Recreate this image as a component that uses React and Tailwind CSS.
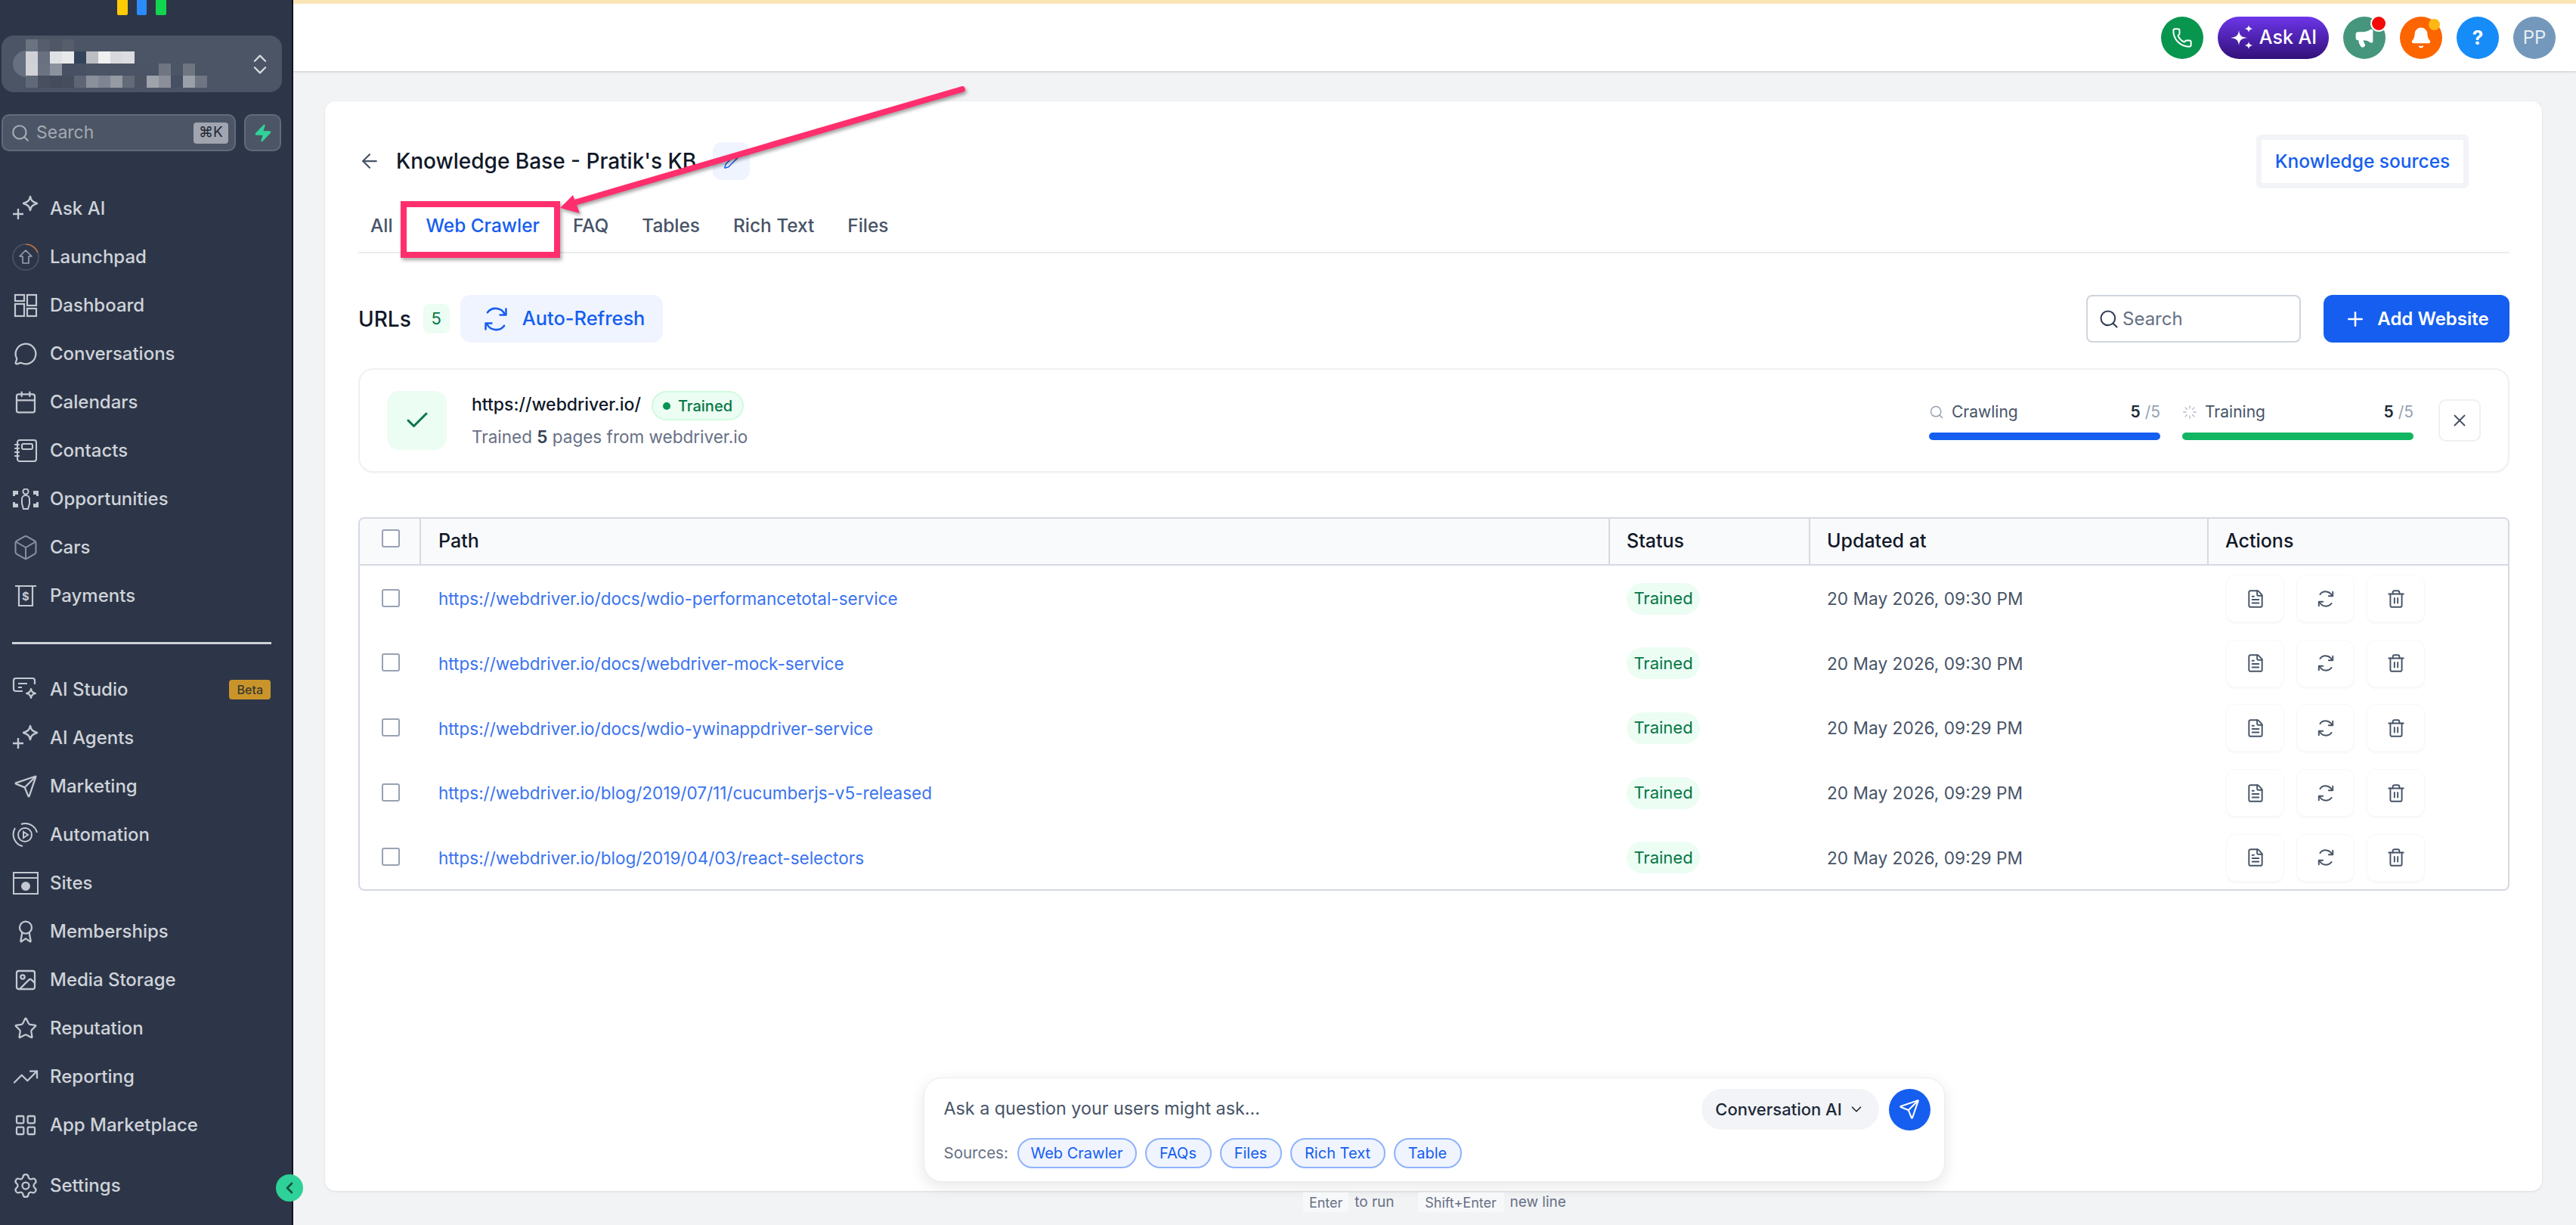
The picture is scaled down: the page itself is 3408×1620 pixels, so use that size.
import React from "react";
import {
  ArrowLeft, Award, Bell, Box, Calendar, Check, ChevronDown, ChevronLeft, ChevronsUpDown, FileText, Image, LayoutGrid,
  Loader, Megaphone, MessageCircle, Pencil, Phone, Plus, Search, Send, Settings, Star, Trash2, TrendingUp, X, Zap,
} from "lucide-react";

const Refresh = ({ className, sw = 1.8 }) => (
  <svg viewBox="0 0 24 24" className={className} fill="none" stroke="currentColor" strokeWidth={sw} strokeLinecap="round" strokeLinejoin="round">
    <path d="M19.5 8A8.5 8.5 0 0 0 5 6.5" />
    <path d="M20.5 3.5v5h-5" />
    <path d="M4.5 16A8.5 8.5 0 0 0 19 17.5" />
    <path d="M3.5 20.5v-5h5" />
  </svg>
);
const Sparkle = () => (
  <svg viewBox="0 0 36 36" className="h-[36px] w-[36px]" fill="none" stroke="currentColor" strokeWidth="2.4">
    <path d="M1 25h14M8 18v14" />
    <path d="M24 2c1 5 3 7 9 9-6 2-8 4-9 9-1-5-3-7-9-9 6-2 8-4 9-9z" strokeLinejoin="round" />
  </svg>
);
const Launch = () => (
  <svg viewBox="0 0 36 36" className="h-[36px] w-[36px]" fill="none" strokeWidth="1.6">
    <circle cx="18" cy="18" r="17" stroke="#4b5565" />
    <path d="M18 1a17 17 0 0 1 16 11" stroke="#c2703d" />
    <path d="M18 9l8 8h-4v9h-8v-9h-4z" stroke="#98a2b3" strokeLinejoin="round" />
  </svg>
);
const Dash = () => (
  <svg viewBox="0 0 32 32" className="h-[32px] w-[32px]" fill="none" stroke="currentColor" strokeWidth="2.2">
    <rect x="2" y="2" width="12" height="8" /><rect x="18" y="2" width="12" height="14" />
    <rect x="2" y="14" width="12" height="16" /><rect x="18" y="20" width="12" height="10" />
  </svg>
);
const ContactsIcon = () => (
  <svg viewBox="0 0 32 32" className="h-[32px] w-[32px]" fill="none" stroke="currentColor" strokeWidth="2.1" strokeLinecap="round">
    <rect x="5" y="2" width="25" height="28" rx="3" />
    <rect x="11" y="7" width="14" height="7" rx="2" />
    <path d="M2 8h5M2 13h5M2 18h5M2 23h5" />
  </svg>
);
const Opp = () => (
  <svg viewBox="0 0 36 28" className="h-[28px] w-[36px]" fill="currentColor">
    <circle cx="18" cy="4" r="3.5" fill="none" stroke="currentColor" strokeWidth="2" />
    <path d="M13 14a5 5 0 0 1 10 0v6l-2 7h-6l-2-7z" fill="none" stroke="currentColor" strokeWidth="2" />
    <path d="M1 3h7v5H4v2H1zM28 3h7v7h-3V8h-4zM1 18h3v2h4v5H1zM32 18h3v7h-7v-5h4z" />
  </svg>
);
const Pay = () => (
  <svg viewBox="0 0 32 32" className="h-[32px] w-[32px]" fill="none" stroke="currentColor" strokeWidth="2.2">
    <path d="M2 3h28M7 3v26h18V3" />
    <text x="16" y="22" textAnchor="middle" fontSize="15" fontWeight="700" fill="currentColor" stroke="none" fontFamily="Inter, sans-serif">$</text>
  </svg>
);
const Studio = () => (
  <svg viewBox="0 0 36 34" className="h-[34px] w-[36px]" fill="none" stroke="currentColor" strokeWidth="2.2">
    <path d="M14 19H5a3 3 0 0 1-3-3V5a3 3 0 0 1 3-3h22a3 3 0 0 1 3 3v5" />
    <path d="M8 9h12M8 14h5" />
    <path d="M25 16c1 4 2 5 6 6-4 1-5 2-6 6-1-4-2-5-6-6 4-1 5-2 6-6z" strokeLinejoin="round" />
  </svg>
);
const Auto = () => (
  <svg viewBox="0 0 36 32" className="h-[32px] w-[36px]" fill="none" stroke="currentColor" strokeWidth="2">
    <path d="M33 13A16 16 0 0 0 12 2M4 7a16 16 0 0 0 10 24" />
    <circle cx="17" cy="16" r="9" />
    <path d="M15 12l6 4-6 4z" />
  </svg>
);
const SiteIcon = () => (
  <svg viewBox="0 0 34 30" className="h-[30px] w-[34px]" fill="none" stroke="currentColor" strokeWidth="2">
    <rect x="1" y="1" width="32" height="28" />
    <path d="M1 8h32" />
    <circle cx="17" cy="19" r="5" fill="currentColor" />
  </svg>
);

const lc = "h-[32px] w-[32px]";
const group1 = [
  ["Ask AI", <Sparkle />], ["Launchpad", <Launch />], ["Dashboard", <Dash />],
  ["Conversations", <MessageCircle className={lc} strokeWidth={1.7} />], ["Calendars", <Calendar className={lc} strokeWidth={1.7} />],
  ["Contacts", <ContactsIcon />], ["Opportunities", <Opp />],
  ["Cars", <Box className="h-[38px] w-[38px] text-[#8a93a3]" strokeWidth={1.3} />], ["Payments", <Pay />],
];
const group2 = [
  ["AI Agents", <Sparkle />], ["Marketing", <Send className={lc} strokeWidth={1.7} />], ["Automation", <Auto />], ["Sites", <SiteIcon />],
  ["Memberships", <Award className={lc} strokeWidth={1.7} />], ["Media Storage", <Image className={lc} strokeWidth={1.7} />],
  ["Reputation", <Star className={lc} strokeWidth={1.7} />], ["Reporting", <TrendingUp className="h-[36px] w-[36px]" strokeWidth={1.5} />],
  ["App Marketplace", <LayoutGrid className={lc} strokeWidth={1.7} />],
];

const NavItem = ({ label, icon, badge }) => (
  <div className="flex h-[64px] items-center pl-[16px] pr-[28px]">
    <span className="flex w-[36px] justify-center text-[#c3c8d1]">{icon}</span>
    <span className="ml-[14px] text-[24px] font-medium text-[#cfd3da]">{label}</span>
    {badge && <span className="ml-auto flex h-[26px] items-center rounded-[4px] bg-[#c9952b] px-[10px] text-[16px] font-medium text-[#3d3a2e]">{badge}</span>}
  </div>
);

const mosaic = [
  ["#6b7280", "#565e6d", "#505867", "#565e6c"],
  ["#cfd1d6", "#697080", "#e0e1e4", "#e8e9ea", "#33435a", "#bcbec3", "#f0f0f1", "#d8d9dc", "#dcdde0"],
  ["#d0d2d6", "#6b7280", "#8b919d", "#485163", "#485163", "#4b5464", "#4b5464", "#4b5464", "#4b5464", "#4b5464", "#4b5464", "#6f7682", "#4b5565", "#6f7682"],
  ["#616877", "#485060", "#444c5c", "#464e5e", "#5e6574", "#8b919b", "#7e8491", "#959aa3", "#636a78", "#4c5464", "#9ea3ab", "#8a8f99", "#465063", "#9a9fa8", "#6f7582"],
];

const Sidebar = () => (
  <aside className="relative flex h-full w-[388px] shrink-0 flex-col border-r-2 border-[#0f1420] bg-[#2d3648]">
    <div className="flex h-[20px] justify-center gap-[12px] pr-[11px]">
      <span className="h-[20px] w-[14px] rounded-b-[2px] bg-[#ffcb05]" />
      <span className="h-[20px] w-[13px] rounded-b-[2px] bg-[#2b8cff]" />
      <span className="h-[20px] w-[14px] rounded-b-[2px] bg-[#12d64f]" />
    </div>
    <div className="relative mx-[2px] mt-[27px] h-[75px] w-[371px] rounded-[16px] bg-[#4b5565] pt-[5px]">
      <span className="absolute left-[15px] top-[20px] h-[35px] w-[30px] rounded-l-full bg-[#667080]" />
      {mosaic.map((r, i) => (
        <div key={i} className="relative flex pl-[32px]">
          {r.map((c, j) => <span key={j} className="h-[16px] w-[16px]" style={{ backgroundColor: c }} />)}
        </div>
      ))}
      <ChevronsUpDown className="absolute right-[12px] top-[21px] h-[34px] w-[34px] text-[#d7dade]" strokeWidth={1.6} />
    </div>
    <div className="mx-[2px] mt-[29px] flex gap-[11px]">
      <div className="flex h-[49px] w-[310px] items-center rounded-[10px] border-2 border-[#626b7a] bg-[#4b5565] pl-[10px] pr-[8px]">
        <Search className="h-[26px] w-[26px] text-[#a6abb5]" strokeWidth={2} />
        <span className="ml-[8px] text-[23px] text-[#a4a9b3]">Search</span>
        <span className="ml-auto flex h-[28px] w-[46px] items-center justify-center rounded-[4px] bg-[#a0a5af] text-[19px] text-[#1f2937]">⌘K</span>
      </div>
      <div className="flex h-[49px] w-[49px] items-center justify-center rounded-[10px] border-2 border-[#626b7a] bg-[#4b5565]">
        <Zap className="h-[26px] w-[26px] text-[#32d29a]" fill="currentColor" strokeWidth={1} />
      </div>
    </div>
    <nav className="mt-[44px]">
      {group1.map(([l, i]) => <NavItem key={l} label={l} icon={i} />)}
    </nav>
    <div className="mx-[16px] mt-[29px] h-[3px] w-[343px] bg-[#cfd2d8]" />
    <div className="mt-[28px]">
      <NavItem label="AI Studio" icon={<Studio />} badge="Beta" />
      {group2.map(([l, i]) => <NavItem key={l} label={l} icon={i} />)}
    </div>
    <div className="mt-[16px]">
      <NavItem label="Settings" icon={<Settings className="h-[36px] w-[36px]" strokeWidth={1.5} />} />
    </div>
    <span className="absolute bottom-[31px] left-[365px] z-10 flex h-[36px] w-[36px] items-center justify-center rounded-full bg-[#2ed198] text-[#14513d]">
      <ChevronLeft className="h-[24px] w-[24px]" strokeWidth={2.6} />
    </span>
  </aside>
);

const Round = ({ bg, children, dot }) => (
  <span className={`relative flex h-[56px] w-[56px] items-center justify-center rounded-full ${bg}`}>
    {children}
    {dot}
  </span>
);

const Header = () => (
  <header className="h-[94px] shrink-0 border-t-[5px] border-[#fbe5b5] bg-white shadow-[0_1px_3px_rgba(16,24,40,0.18)]">
    <div className="flex h-full items-center justify-end gap-[19px] pr-[27px]">
      <Round bg="bg-[#08964f]"><Phone className="h-[28px] w-[28px] text-white" strokeWidth={1.7} /></Round>
      <span className="flex h-[56px] w-[147px] items-center justify-center gap-[7px] rounded-full bg-gradient-to-b from-[#6d36ea] to-[#32107a] text-[25px] font-medium text-white">
        <svg viewBox="0 0 32 36" className="h-[36px] w-[32px]" fill="white">
          <path d="M12 8c1 7 3 9 11 10-8 1-10 3-11 10-1-7-3-9-11-10 8-1 10-3 11-10z" />
          <path d="M25 1c.6 3 1.6 4 5 5-3.4 1-4.4 2-5 5-.6-3-1.6-4-5-5 3.4-1 4.4-2 5-5zM25 23c.6 3 1.6 4 5 5-3.4 1-4.4 2-5 5-.6-3-1.6-4-5-5 3.4-1 4.4-2 5-5z" />
        </svg>
        Ask AI
      </span>
      <Round bg="bg-[#45967d]" dot={<span className="absolute right-[-2px] top-[-2px] h-[22px] w-[22px] rounded-full border-2 border-white bg-[#f50a0a]" />}>
        <Megaphone className="h-[28px] w-[28px] text-white" fill="white" strokeWidth={1.5} />
      </Round>
      <Round bg="bg-[#fd6500]" dot={<span className="absolute right-[3px] top-[3px] h-[15px] w-[15px] rounded-full bg-[#fdb813]" />}>
        <Bell className="h-[30px] w-[30px] text-white" fill="white" strokeWidth={1.5} />
      </Round>
      <Round bg="bg-[#168cf9]"><span className="text-[26px] font-bold text-white">?</span></Round>
      <Round bg="bg-[#7398bc]"><span className="text-[24px] text-[#e8eef4]">PP</span></Round>
    </div>
  </header>
);

const rows = [
  ["https://webdriver.io/docs/wdio-performancetotal-service", "20 May 2026, 09:30 PM"],
  ["https://webdriver.io/docs/webdriver-mock-service", "20 May 2026, 09:30 PM"],
  ["https://webdriver.io/docs/wdio-ywinappdriver-service", "20 May 2026, 09:29 PM"],
  ["https://webdriver.io/blog/2019/07/11/cucumberjs-v5-released", "20 May 2026, 09:29 PM"],
  ["https://webdriver.io/blog/2019/04/03/react-selectors", "20 May 2026, 09:29 PM"],
];

const ActionBtn = ({ children }) => (
  <span className="flex h-[63px] w-[77px] items-center justify-center rounded-[12px] border border-[#f7f8f9] shadow-[0_2px_2px_rgba(16,24,40,0.03)]">{children}</span>
);

const Table = () => (
  <div className="mt-[59px] overflow-hidden rounded-[8px] border-2 border-[#d5d9e2]">
    <div className="flex h-[62px] items-center border-b-2 border-[#d5d9e2] bg-[#f9fafb] text-[25px] font-medium text-[#101828]">
      <div className="flex h-full w-[81px] items-start border-r-2 border-[#d5d9e2] pl-[29px] pt-[14px]">
        <span className="h-[24px] w-[24px] rounded-[3px] border-2 border-[#98a2b3] bg-white" />
      </div>
      <div className="flex h-full w-[1573px] items-center border-r-2 border-[#d5d9e2] pl-[23px]">Path</div>
      <div className="flex h-full w-[265px] items-center border-r-2 border-[#d5d9e2] pl-[22px]">Status</div>
      <div className="flex h-full w-[527px] items-center border-r-2 border-[#d5d9e2] pl-[22px]">Updated at</div>
      <div className="pl-[22px]">Actions</div>
    </div>
    {rows.map(([u, d]) => (
      <div key={u} className="flex h-[85.6px] items-center">
        <div className="flex w-[81px] pl-[29px]">
          <span className="h-[24px] w-[24px] rounded-[3px] border-2 border-[#98a2b3] bg-white" />
        </div>
        <div className="mt-[3px] w-[1573px] pl-[23px] text-[22.5px] text-[#3a73ef]">{u}</div>
        <div className="mt-[2px] w-[265px] pl-[22px]">
          <span className="flex h-[42px] w-[97px] items-center justify-center rounded-full bg-[#ecfdf3] text-[22px] text-[#067647]">Trained</span>
        </div>
        <div className="mt-[3px] w-[527px] pl-[22px] text-[22.7px] text-[#475467]">{d}</div>
        <div className="mt-[2px] flex gap-[16px] pl-[23px] text-[#475467]">
          <ActionBtn><FileText className="h-[26px] w-[26px]" strokeWidth={1.8} /></ActionBtn>
          <ActionBtn><Refresh className="h-[26px] w-[26px]" /></ActionBtn>
          <ActionBtn><Trash2 className="h-[26px] w-[26px]" strokeWidth={1.8} /></ActionBtn>
        </div>
      </div>
    ))}
  </div>
);

const Progress = ({ icon, label, color }) => (
  <div className="w-[306px]">
    <div className="flex h-[30px] items-center justify-between text-[21px] text-[#475467]">
      <span className="flex items-center gap-[10px]">{icon}{label}</span>
      <span><b className="font-semibold text-[#1d2939]">5</b> <span className="text-[#98a2b3]">/5</span></span>
    </div>
    <div className={`mt-[12px] h-[10px] rounded-full ${color}`} />
  </div>
);

const Chip = ({ children, w }) => (
  <span className={`flex h-[40px] ${w} items-center justify-center rounded-full border-2 border-[#8fb2fb] bg-[#eff4ff] text-[20px] text-[#155eef]`}>{children}</span>
);

const AskBox = () => (
  <div className="mx-auto mt-auto mb-[12px] h-[138px] w-[1351px] rounded-[24px] border border-[#eaecf0] bg-white pl-[26px] pr-[18px] pt-[14px] shadow-[0_6px_20px_rgba(16,24,40,0.1)]">
    <div className="flex h-[54px] items-center">
      <span className="mb-[2px] text-[23.3px] text-[#475467]">Ask a question your users might ask...</span>
      <span className="ml-auto flex h-[54px] w-[235px] items-center justify-center gap-[8px] rounded-full bg-[#f2f4f7] text-[22px] font-medium text-[#1d2939]">
        Conversation AI <ChevronDown className="h-[22px] w-[22px]" strokeWidth={1.8} />
      </span>
      <span className="ml-[13px] flex h-[55px] w-[55px] items-center justify-center rounded-full bg-[#155eef]">
        <Send className="h-[28px] w-[28px] text-white" strokeWidth={1.8} />
      </span>
    </div>
    <div className="mt-[11px] flex items-center gap-[11px]">
      <span className="w-[86px] text-[20.5px] text-[#667085]">Sources:</span>
      <Chip w="w-[158px]">Web Crawler</Chip>
      <Chip w="w-[88px]">FAQs</Chip>
      <Chip w="w-[82px]">Files</Chip>
      <Chip w="w-[126px]">Rich Text</Chip>
      <Chip w="w-[90px]">Table</Chip>
    </div>
  </div>
);

const Card = () => (
  <section className="flex h-[1441px] flex-col rounded-[14px] bg-white pl-[44px] pr-[43px] pt-[54px] shadow-[0_1px_3px_rgba(16,24,40,0.1)]">
    <div className="flex h-[50px] items-center">
      <ArrowLeft className="h-[30px] w-[30px] text-[#475467]" strokeWidth={1.8} />
      <span className="ml-[20px] text-[28px] font-medium text-[#101828]">Knowledge Base - Pratik's KB</span>
      <span className="ml-[22px] flex h-[50px] w-[49px] items-center justify-center rounded-[12px] bg-[#eff4ff]">
        <Pencil className="h-[22px] w-[22px] text-[#155eef]" strokeWidth={1.6} />
      </span>
      <span className="ml-auto mr-[54px] rounded-[6px] border-[7px] border-[#f2f4f7] bg-white p-0">
        <span className="flex h-[57px] w-[267px] items-center justify-center rounded-[6px] text-[24.5px] font-medium text-[#155eef]">Knowledge sources</span>
      </span>
    </div>
    <div className="relative mt-[10px] flex h-[87px] items-center gap-[44px] border-b-2 border-[#eaecf0] pl-[16px] pt-[16px] text-[24.4px] font-medium text-[#475467]">
      <span>All</span>
      <span className="text-[#155eef]">Web Crawler</span>
      <span>FAQ</span>
      <span>Tables</span>
      <span>Rich Text</span>
      <span>Files</span>
    </div>
    <div className="mt-[55px] flex h-[63px] items-center">
      <span className="text-[28px] font-medium text-[#101828]">URLs</span>
      <span className="ml-[16px] flex h-[39px] w-[35px] items-center justify-center rounded-[8px] bg-[#ecfdf3] text-[22px] text-[#067647]">5</span>
      <span className="ml-[14px] flex h-[63px] w-[268px] items-center gap-[16px] rounded-[14px] bg-[#eff4ff] pl-[28px] text-[25.4px] font-medium text-[#155eef]">
        <Refresh className="h-[38px] w-[38px]" sw={1.6} />Auto-Refresh
      </span>
      <span className="ml-auto flex h-[63px] w-[284px] items-center rounded-[8px] border-2 border-[#d0d5dd] pl-[14px] text-[24px] text-[#667085]">
        <Search className="h-[28px] w-[28px] text-[#344054]" strokeWidth={1.8} /><span className="ml-[4px]">Search</span>
      </span>
      <span className="ml-[30px] flex h-[63px] w-[246px] items-center justify-center gap-[14px] rounded-[12px] bg-[#155eef] text-[24px] font-semibold text-white">
        <Plus className="h-[30px] w-[30px]" strokeWidth={2} />Add Website
      </span>
    </div>
    <div className="mt-[34px] flex h-[138px] items-center rounded-[20px] border-2 border-[#eef0f3] pl-[36px] pr-[36px] shadow-[0_1px_2px_rgba(16,24,40,0.04)]">
      <span className="flex h-[78px] w-[79px] items-center justify-center rounded-[16px] bg-[#ecfdf3]">
        <Check className="h-[36px] w-[36px] text-[#067647]" strokeWidth={2} />
      </span>
      <div className="ml-[33px]">
        <div className="flex items-center gap-[14px]">
          <span className="mb-[2px] text-[23px] font-medium text-[#101828]">https://webdriver.io/</span>
          <span className="flex h-[39px] w-[122px] items-center justify-center gap-[10px] rounded-full border-2 border-[#d1fadf] bg-[#ecfdf3] text-[20px] font-medium text-[#067647]">
            <span className="h-[10px] w-[10px] rounded-full bg-[#079455]" />Trained
          </span>
        </div>
        <div className="mt-[5px] text-[22.5px] text-[#667085]">Trained <b className="font-semibold text-[#344054]">5</b> pages from webdriver.io</div>
      </div>
      <div className="ml-auto flex items-start gap-[29px]">
        <Progress icon={<Search className="h-[20px] w-[20px] text-[#98a2b3]" strokeWidth={1.8} />} label="Crawling" color="bg-[#155eef]" />
        <Progress icon={<Loader className="h-[20px] w-[20px] text-[#b5bcc8]" strokeWidth={1.6} />} label="Training" color="bg-[#12b561]" />
      </div>
      <span className="ml-[33px] flex h-[56px] w-[56px] items-center justify-center rounded-[10px] border-2 border-[#eef0f3]">
        <X className="h-[26px] w-[26px] text-[#475467]" strokeWidth={1.8} />
      </span>
    </div>
    <Table />
    <AskBox />
  </section>
);

const Annotation = () => (
  <>
    <span className="pointer-events-none absolute left-[530px] top-[266px] h-[75px] w-[211px] border-[8px] border-[#ff2f6e] shadow-[2px_3px_5px_rgba(0,0,0,0.35)]" />
    <svg className="pointer-events-none absolute left-0 top-0 drop-shadow-[2px_3px_2px_rgba(0,0,0,0.35)]" width="1300" height="300" viewBox="0 0 1300 300" fill="#ff2f6e">
      <line x1="1273" y1="118" x2="760" y2="268" stroke="#ff2f6e" strokeWidth="8" strokeLinecap="round" />
      <path d="M741 275 L758 258 L767 282 Z" />
    </svg>
  </>
);

export default function App() {
  return (
    <div className="relative flex h-[1620px] w-[3408px] overflow-hidden bg-[#f2f3f5] font-['Inter',sans-serif]">
      <Sidebar />
      <main className="flex min-w-0 flex-1 flex-col">
        <Header />
        <div className="pl-[42px] pr-[45px] pt-[40px]">
          <Card />
        </div>
        <div className="mt-[1px] flex items-center justify-center text-[19px] text-[#667085]">
          <span className="flex h-[26px] w-[60px] items-center justify-center bg-[#f7f8fa] text-[18px]">Enter</span>
          <span className="ml-[8px]">to run</span>
          <span className="ml-[31px] flex h-[26px] w-[114px] items-center justify-center bg-[#f7f8fa] text-[18px]">Shift+Enter</span>
          <span className="ml-[8px]">new line</span>
        </div>
      </main>
      <Annotation />
    </div>
  );
}
